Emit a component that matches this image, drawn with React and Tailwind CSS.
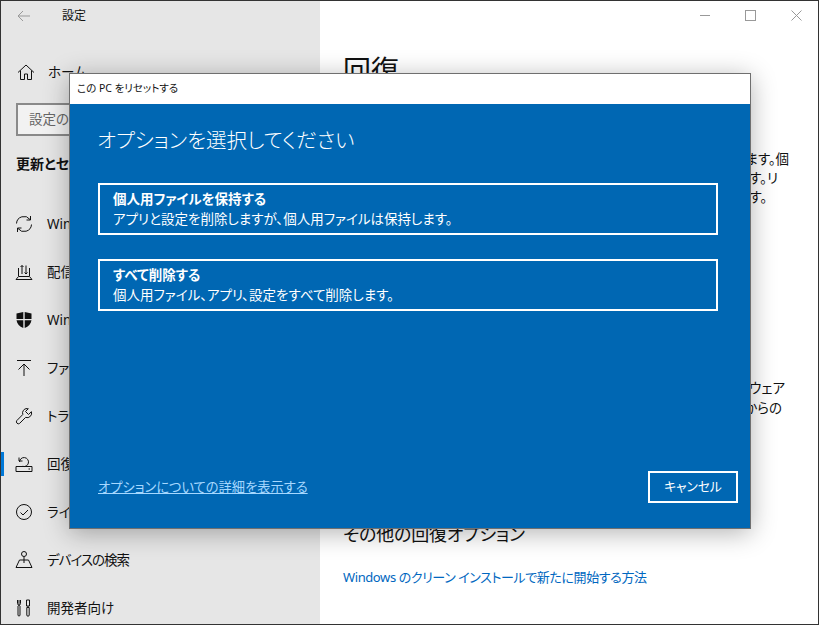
const fontStack = "font-['Noto_Sans','Noto_Sans_CJK_JP',sans-serif] [font-feature-settings:'palt']";

const Icon = ({ children }) => (
  <svg width="20" height="20" viewBox="0 0 20 20" fill="none" stroke="#111" strokeWidth="1" className="shrink-0">
    {children}
  </svg>
);

const HomeIcon = () => (
  <Icon>
    <path d="M2 10.500 10 3l8 7.500M4.500 8.500V17.500H8.500V12h3v5.500h4V8.500" />
  </Icon>
);
const SyncIcon = () => (
  <Icon>
    <path d="M2.500 9.500A7.500 7.500 0 0 1 16 5.500M17.500 10.500A7.500 7.500 0 0 1 4 14.500" />
    <path d="M16.500 2v4h-4M3.500 18v-4h4" />
  </Icon>
);
const DeliveryIcon = () => (
  <Icon>
    <path d="M4.500 6v8M15.500 6v8M2 17.500h16M2 17.500l2.500-3h11l2.500 3" />
    <path d="M8 12V3.500M6.500 5 8 3.500 9.500 5M12 3.500V12M10.500 10.500 12 12l1.500-1.500" />
  </Icon>
);
const ShieldIcon = () => (
  <svg width="20" height="20" viewBox="0 0 20 20" className="shrink-0">
    <path fill="#111" d="M2.500 3.500 9.300 2v7H2.500ZM10.700 2l6.800 1.500V9h-6.800ZM2.500 10.300h6.800V18C5.500 16.500 3 14 2.500 10.300ZM10.700 10.300h6.800c-.5 3.700-3 6.200-6.800 7.700Z" />
  </svg>
);
const BackupIcon = () => (
  <Icon>
    <path d="M3 2.500h14M10 18V6M4.500 11.500 10 6l5.500 5.500" />
  </Icon>
);
const WrenchIcon = () => (
  <Icon>
    <path d="M13 2.500a4.500 4.500 0 0 0-4.200 6L2.800 14.600a2 2 0 0 0 2.800 2.800l6-6a4.500 4.500 0 0 0 5.800-5.700L14.500 8.500l-3-3 2.800-2.800a4.500 4.500 0 0 0-1.300-.2Z" />
  </Icon>
);
const RecoveryIcon = () => (
  <Icon>
    <path d="M2 12.500h16v5H2ZM14.500 15h1.500" />
    <path d="M5.500 8a4.500 4.500 0 1 1 3 4.300M5 3.500V7h3.500" />
  </Icon>
);
const CheckCircleIcon = () => (
  <Icon>
    <circle cx="10" cy="10" r="7.500" />
    <path d="m6.500 10.500 2.500 2.500 5-5" />
  </Icon>
);
const FindIcon = () => (
  <Icon>
    <circle cx="10" cy="4" r="2.500" />
    <path d="M10 6.500V13M2 17.500h16M2 17.500 5.500 10h9l3.500 7.500" />
  </Icon>
);
const DevIcon = () => (
  <Icon>
    <path d="M5 2v5.500M3.500 2v3.500l1 2h1l1-2V2M4 8v9a1 1 0 0 0 2 0V8" />
    <path d="M12.500 2h3v6h-3ZM14 8v1.500M12.800 9.500h2.400V17a1.200 1.200 0 0 1-2.400 0Z" />
  </Icon>
);

const navItems = [
  { icon: <SyncIcon />, label: "Windows Update" },
  { icon: <DeliveryIcon />, label: "配信の最適化" },
  { icon: <ShieldIcon />, label: "Windows セキュリティ" },
  { icon: <BackupIcon />, label: "ファイルのバックアップ" },
  { icon: <WrenchIcon />, label: "トラブルシューティング" },
  { icon: <RecoveryIcon />, label: "回復", active: true },
  { icon: <CheckCircleIcon />, label: "ライセンス認証" },
  { icon: <FindIcon />, label: "デバイスの検索", narrow: true },
  { icon: <DevIcon />, label: "開発者向け" },
];

const Sidebar = () => (
  <div className="w-[319px] shrink-0 bg-[#e6e6e6] flex flex-col">
    <div className="h-[30px] flex items-center pl-[16px] shrink-0">
      <svg width="14" height="12" viewBox="0 0 14 12" fill="none" stroke="#999" strokeWidth="1">
        <path d="M13 6H1M6 1 1 6l5 5" />
      </svg>
      <span className="ml-[31px] text-xs text-[#111]">設定</span>
    </div>
    <div className="h-[24px] mt-[29px] flex items-center pl-[15px] shrink-0">
      <HomeIcon />
      <span className="ml-[12px] text-[13.5px] text-[#111]">ホーム</span>
    </div>
    <div className="ml-[15px] mt-[19px] w-[280px] h-[33px] border-2 border-[#8a8a8a] bg-[#f2f2f2] flex items-center pl-[11px] text-[13.5px] text-[#666] shrink-0">
      設定の検索
    </div>
    <div className="ml-[15px] mt-[18px] h-[20px] flex items-center text-sm font-bold text-[#111] shrink-0">
      更新とセキュリティ
    </div>
    <div className="mt-[26px] flex flex-col">
      {navItems.map((item) => (
        <div key={item.label} className="h-[48px] flex items-center pl-[13px] relative shrink-0">
          {item.active && <div className="absolute left-0 top-[12px] w-[3px] h-[24px] bg-[#0078d7]" />}
          {item.icon}
          <span className={`ml-[13px] text-[13.5px] text-[#111] ${item.narrow ? "tracking-[-1px]" : ""}`}>{item.label}</span>
        </div>
      ))}
    </div>
  </div>
);

const Content = () => (
  <div className="flex-1 min-w-0 bg-white flex flex-col pl-[23px] text-[#111] overflow-hidden">
    <div className="h-[28px] shrink-0 flex items-center justify-end gap-[35px] pr-[16px]">
      <div className="w-[10px] h-px bg-[#999]" />
      <div className="w-[11px] h-[11px] border border-[#999]" />
      <svg width="11" height="11" viewBox="0 0 11 11" stroke="#999" strokeWidth="1">
        <path d="m.5.500 10 10M10.500.500l-10 10" />
      </svg>
    </div>
    <h1 className="text-[28px] leading-[36px] mt-[23px] shrink-0">回復</h1>
    <div className="mt-[62px] text-[13.5px] leading-[19px] whitespace-nowrap shrink-0">
      <p className="w-[446px] flex justify-end">PC が正常に動作していない場合は、リセットすると解決する場合があります。個</p>
      <p className="w-[435px] flex justify-end">人用ファイルを保持または削除し、Windows を再インストールします。リ</p>
      <p className="w-[424px] flex justify-end">セットすると、システムに付属するオプションが使用されます。</p>
    </div>
    <div className="mt-[171px] text-[13.5px] leading-[20px] whitespace-nowrap shrink-0">
      <p className="w-[442px] flex justify-end">PC の起動設定や UEFI ファームウェア設定を変更するには、ファームウェア</p>
      <p className="w-[439px] flex justify-end">Windows を再起動して、デバイスやディスクからの</p>
    </div>
    <h2 className="text-[18px] tracking-[-0.2px] leading-[28px] mt-[102px] shrink-0">その他の回復オプション</h2>
    <a className="text-[13px] tracking-[-0.4px] text-[#0067c0] mt-[19px] leading-[20px] shrink-0">Windows のクリーン インストールで新たに開始する方法</a>
  </div>
);

const ResetDialog = () => (
  <div className="absolute left-[68px] top-[72px] w-[682px] h-[456px] border border-[#6f6f6f] flex flex-col shadow-[0_4px_24px_rgba(0,0,0,0.3)]">
    <div className="h-[30px] bg-white flex items-center pl-[7px] text-[10.5px] text-[#111] shrink-0">この PC をリセットする</div>
    <div className="flex-1 bg-[#0067b3] text-white flex flex-col pt-[21px] px-[28px] pb-[25px]">
      <h2 className="text-[20.5px] leading-[30px] font-light -ml-px">オプションを選択してください</h2>
      <button className="mt-[28px] w-[620px] h-[52px] border-2 border-white text-left pl-[13px] flex flex-col justify-center">
        <span className="text-[13.5px] font-bold leading-[20px]">個人用ファイルを保持する</span>
        <span className="text-[13.5px] leading-[20px]">アプリと設定を削除しますが、個人用ファイルは保持します。</span>
      </button>
      <button className="mt-[24px] w-[620px] h-[52px] border-2 border-white text-left pl-[13px] flex flex-col justify-center">
        <span className="text-[13.5px] font-bold leading-[20px]">すべて削除する</span>
        <span className="text-[13.5px] leading-[20px]">個人用ファイル、アプリ、設定をすべて削除します。</span>
      </button>
      <div className="mt-auto flex items-center justify-between">
        <a className="mt-[2px] text-[13.25px] text-[#a6d8ff] underline">オプションについての詳細を表示する</a>
        <button className="w-[90px] h-[32px] border-2 border-white text-[12.75px] text-white -mr-[16px]">キャンセル</button>
      </div>
    </div>
  </div>
);

export default function App() {
  return (
    <div className={`w-[819px] h-[625px] relative overflow-hidden border border-[#333] flex ${fontStack}`}>
      <Sidebar />
      <Content />
      <ResetDialog />
    </div>
  );
}
